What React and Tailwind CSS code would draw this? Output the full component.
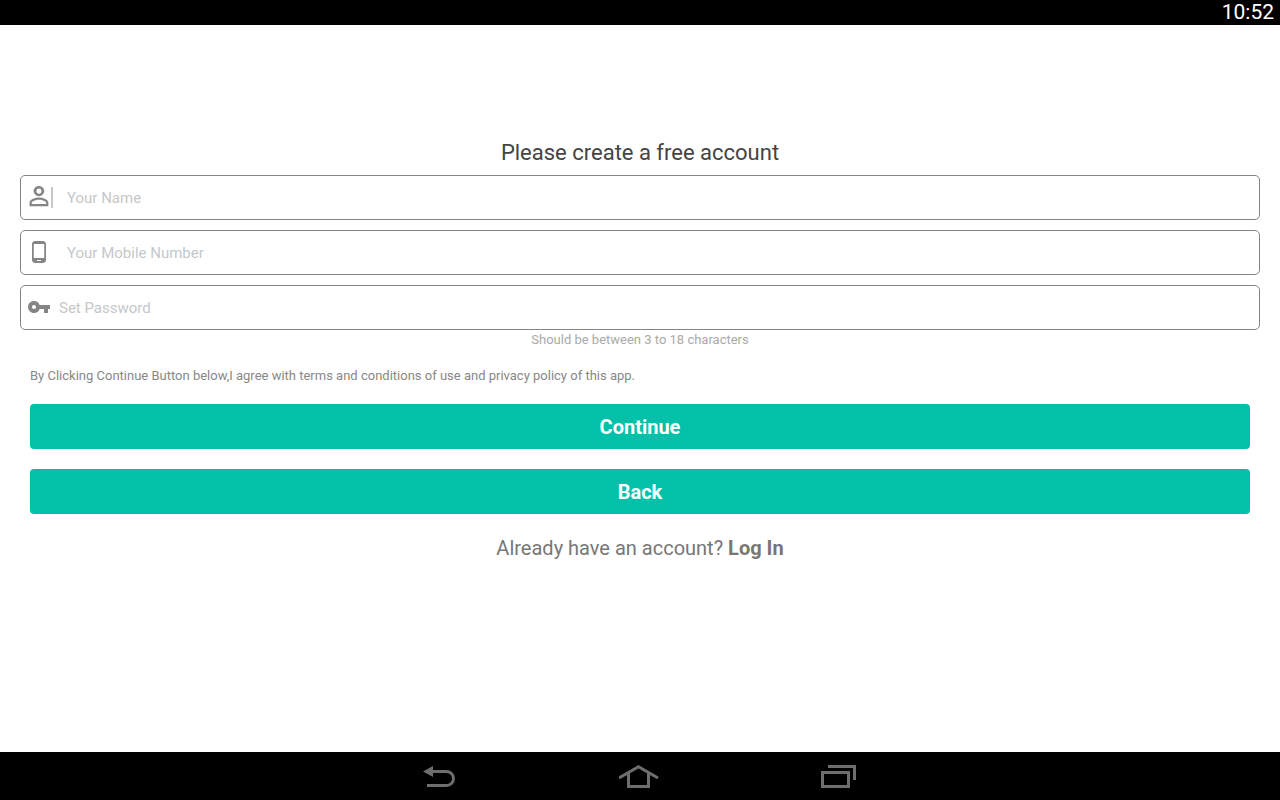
import React, { useState } from 'react';
import { MdPhoneAndroid, MdVpnKey } from 'react-icons/md';

const PersonIcon = () => (
  <svg viewBox="0 0 24 24" fill="currentColor" className="size-6" aria-hidden="true">
    <path
      transform="translate(2.5 1) scale(1.18 1.27) translate(-4 -4)"
      d="M12 5.9a2.1 2.1 0 1 1 0 4.2 2.1 2.1 0 0 1 0-4.2m0 9c2.97 0 6.1 1.46 6.1 2.1v1.1H5.9V17c0-.64 3.13-2.1 6.1-2.1M12 4C9.600 4 7.500 5.790 7.500 8s2.100 4 4.500 4 4.500-1.790 4.500-4-2.100-4-4.500-4m0 9c-2.670 0-8 1.340-8 4v3h16v-3c0-2.660-5.330-4-8-4"
    />
  </svg>
);

// Form fields, in display order
const fields = [
  { id: 'name', label: 'Your Name', type: 'text', icon: <PersonIcon />, caret: true, gap: 'pl-4' },
  { id: 'mobile', label: 'Your Mobile Number', type: 'tel', icon: <MdPhoneAndroid size={24} />, gap: 'pl-4' },
  { id: 'password', label: 'Set Password', type: 'password', icon: <MdVpnKey size={24} />, gap: 'pl-2' },
];

const Field = ({ field, value, onChange }) => (
  <div className="flex h-[45px] items-center rounded-[5px] border border-[#858585] pl-1.5">
    <label htmlFor={field.id} aria-label={field.label} className="flex w-6 justify-center pb-0.5 text-[#858585]">
      {field.icon}
    </label>
    <div className={`relative flex flex-1 items-center self-stretch ${field.gap}`}>
      {field.caret && !value && <span className="absolute top-[11px] left-0 h-[21px] w-0.5 bg-[#c8c8c8]" />}
      <input
        id={field.id}
        type={field.type}
        value={value}
        onChange={(e) => onChange(field.id, e.target.value)}
        placeholder={field.label}
        className="h-5 min-w-0 flex-1 text-[15px] leading-5 text-[#444444] outline-none placeholder:text-[#c5c8ca]"
      />
    </div>
  </div>
);

const StatusBar = () => (
  <header className="flex h-[25px] items-center justify-end bg-black px-1.5 pb-0.5 text-[21px] leading-6 text-white">
    <time>10:52</time>
  </header>
);

const NavBar = () => (
  <nav className="flex h-12 items-center justify-center gap-[158px] bg-black text-[#6e6e6e]">
    <button type="button" aria-label="Back">
      <svg width="42" height="24" viewBox="0 0 42 24" fill="none">
        <path d="M13 7.5h14.500a7 7 0 0 1 0 14H8" stroke="currentColor" strokeWidth="3" />
        <path d="M4 7.500 14 2v11z" fill="currentColor" />
      </svg>
    </button>
    <button type="button" aria-label="Home">
      <svg width="42" height="24" viewBox="0 0 42 24" fill="none" stroke="currentColor" strokeWidth="3">
        <path d="M0 14 19.500 2.800 39 14M9.500 9.500v13h20v-13" />
      </svg>
    </button>
    <button type="button" aria-label="Recent apps">
      <svg width="42" height="24" viewBox="0 0 42 24" fill="none" stroke="currentColor" strokeWidth="3">
        <path d="M3.500 8.500h26v14h-26zM9 2.500h26.500V16" />
      </svg>
    </button>
  </nav>
);

const App = () => {
  const [values, setValues] = useState({ name: '', mobile: '', password: '' });

  const handleChange = (id, value) => setValues((prev) => ({ ...prev, [id]: value }));

  return (
    <div className="flex min-h-screen flex-col bg-white font-[Roboto,sans-serif]">
      <StatusBar />

      <main className="flex-1 px-5 pt-[114px]">
        <form onSubmit={(e) => e.preventDefault()}>
          <h1 className="text-center text-[22px] leading-7 text-[#444444]">Please create a free account</h1>

          {/* Inputs */}
          <div className="mt-2 flex flex-col gap-2.5">
            {fields.map((field) => (
              <Field key={field.id} field={field} value={values[field.id]} onChange={handleChange} />
            ))}
          </div>
          <p className="text-center text-[13px] leading-5 text-[#aaaaaa]">Should be between 3 to 18 characters</p>

          {/* Terms and actions */}
          <div className="px-2.5 pt-4">
            <p className="text-[13px] leading-5 text-[#888888]">
              By Clicking Continue Button below,I agree with terms and conditions of use and privacy policy of this app.
            </p>
            <div className="mt-[18px] flex flex-col gap-5 text-xl font-bold text-white">
              <button type="submit" className="h-[45px] rounded bg-[#03c1a8]">Continue</button>
              <button type="button" className="h-[45px] rounded bg-[#03c1a8]">Back</button>
            </div>
          </div>

          <p className="mt-5 text-center text-xl text-[#777777]">
            Already have an account? <a href="#login" className="font-bold">Log In</a>
          </p>
        </form>
      </main>

      <NavBar />
    </div>
  );
};

export default App;
